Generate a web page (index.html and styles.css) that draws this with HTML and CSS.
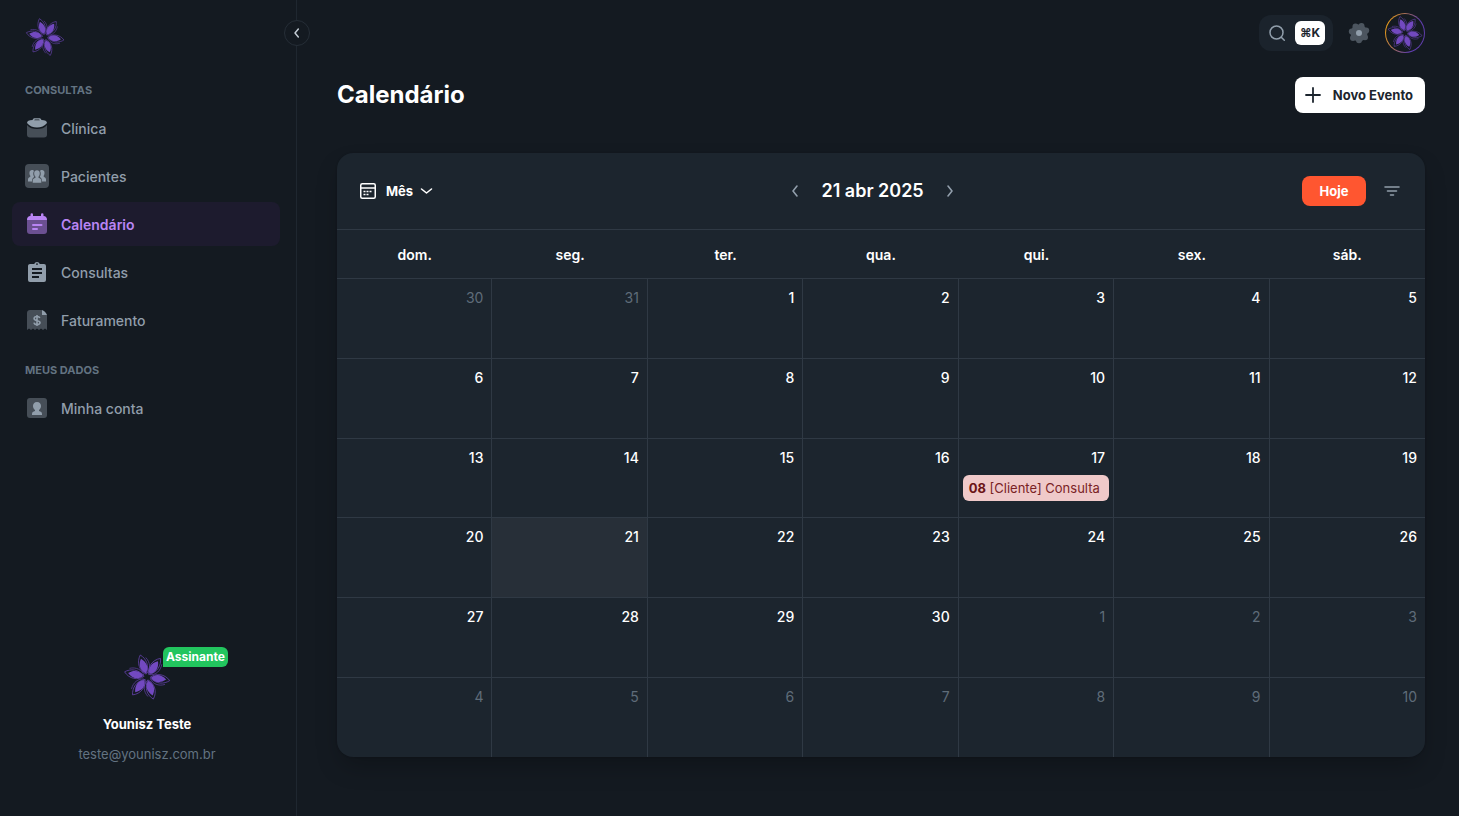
FILE: index.html
```html
<!DOCTYPE html>
<html lang="pt-BR">
<head>
    <meta charset="UTF-8">
    <meta name="viewport" content="width=device-width, initial-scale=1.0">
    <title>Calendário</title>
    <link rel="stylesheet" href="styles.css">
</head>
<body>
    <!-- Shared symbols -->
    <svg class="symbols" aria-hidden="true">
        <symbol id="petal" viewBox="0 0 48 48">
            <path d="M24 21C18.500 16 18 7 24 1c4.500 5 6 13 0 20z" fill="none" stroke="#6a45b4" stroke-width=".7"/>
            <path d="M25 20.500c5-3 6.500-9.500 3.500-15.500" fill="none" stroke="#6a45b4" stroke-width=".6"/>
            <path d="M24 20c-4.800-4-5-10-.4-15.300 4.800 5 5 11.300.4 15.300z" fill="#7249c0"/>
        </symbol>
        <symbol id="flower" viewBox="0 0 48 48">
            <use href="#petal" width="48" height="48" transform="rotate(-17 24 24)"/>
            <use href="#petal" width="48" height="48" transform="rotate(36 24 24)"/>
            <use href="#petal" width="48" height="48" transform="rotate(99 24 24)"/>
            <use href="#petal" width="48" height="48" transform="rotate(164 24 24)"/>
            <use href="#petal" width="48" height="48" transform="rotate(219 24 24)"/>
            <use href="#petal" width="48" height="48" transform="rotate(283 24 24)"/>
        </symbol>
    </svg>

    <div class="layout">
        <aside class="sidebar">
            <a href="#" class="logo" aria-label="Início">
                <svg width="40" height="40"><use href="#flower"/></svg>
            </a>
            <button class="collapse-btn" aria-label="Recolher menu">
                <svg width="16" height="16" viewBox="0 0 24 24" fill="none" stroke="currentColor" stroke-width="2.200" stroke-linecap="round" stroke-linejoin="round"><path d="M14 6l-5 6 5 6"/></svg>
            </button>

            <nav class="nav">
                <h2 class="nav-title">Consultas</h2>
                <ul class="nav-list">
                    <li><a href="#" class="nav-item">
                        <svg width="24" height="24" viewBox="0 0 24 24" fill="currentColor">
                            <path opacity=".4" d="M2 9c2.500 3 6 4 10 4s7.500-1 10-4v9.500a3 3 0 0 1-3 3H5a3 3 0 0 1-3-3z"/>
                            <path d="M7.500 4C8 2.700 9 2.300 10 2.300h4c1 0 2 .4 2.500 1.700C20 4.300 22 5 22 7c-2.500 3.300-6 4.500-10 4.500S4.500 10.300 2 7c0-2 2-2.700 5.500-3zm1.700 0.200h5.600c-.2-.6-.5-.8-.8-.8h-4c-.3 0-.6.2-.8.800z" fill-rule="evenodd"/>
                        </svg>
                        Clínica
                    </a></li>
                    <li><a href="#" class="nav-item">
                        <svg width="24" height="24" viewBox="0 0 24 24" fill="currentColor">
                            <rect opacity=".4" width="24" height="24" rx="4"/>
                            <path d="M7 6c1 0 1.600.4 2 1-.7 1-.8 2.200-.7 3.400.1 1 .5 1.800 1 2.500C7.500 13.700 7 15 7 17.500H3v-2c0-1.600 1.200-2.200 2.300-2.700v-1C4 10 4 6 7 6zM17 6c-1 0-1.600.4-2 1 .7 1 .8 2.200.7 3.400-.1 1-.5 1.800-1 2.500 1.800.8 2.300 2.100 2.300 4.600h4v-2c0-1.600-1.200-2.200-2.300-2.700v-1C20 10 20 6 17 6z"/>
                            <path d="M12 6.300c3.600 0 3.300 4.700 1.500 6.500v1c1.500.5 2.800 1.100 2.800 3v2H7.700v-2c0-1.900 1.300-2.500 2.800-3v-1C8.700 11 8.400 6.300 12 6.300z"/>
                        </svg>
                        Pacientes
                    </a></li>
                    <li><a href="#" class="nav-item active" aria-current="page">
                        <svg width="24" height="24" viewBox="0 0 24 24" fill="currentColor">
                            <path opacity=".5" d="M2 8h20v11a3 3 0 0 1-3 3H5a3 3 0 0 1-3-3z"/>
                            <path d="M5.500 2.500a1 1 0 0 1 2.500 0V4h8V2.500a1 1 0 0 1 2.500 0V4C21 4.200 22 5.500 22 8H2c0-2.500 1-3.800 3.500-4z"/>
                            <rect x="7" y="12" width="10.500" height="2" rx="1"/>
                            <rect x="7" y="16" width="6" height="2" rx="1"/>
                        </svg>
                        Calendário
                    </a></li>
                    <li><a href="#" class="nav-item">
                        <svg width="24" height="24" viewBox="0 0 24 24" fill="currentColor">
                            <path fill-rule="evenodd" d="M5 4h4.200a3 3 0 0 1 5.600 0H19a2 2 0 0 1 2 2v14a2 2 0 0 1-2 2H5a2 2 0 0 1-2-2V6c0-1.100.9-2 2-2zm7-.8a.8.8 0 1 0 0 1.800.8.8 0 0 0 0-1.800zM7 8v2h10V8zm0 4v2h10v-2zm0 4v2h7v-2z"/>
                        </svg>
                        Consultas
                    </a></li>
                    <li><a href="#" class="nav-item">
                        <svg width="24" height="24" viewBox="0 0 24 24" fill="currentColor">
                            <path opacity=".4" d="M5 2h12v5h5v15l-2-1.500-2 1.500-2-1.500-2 1.500-2-1.500-2 1.500-2-1.500L6 22l-2-1.500L2 22V5c0-1.700 1.300-3 3-3z"/>
                            <path d="M17 2c2 .5 4 2.500 5 5h-5z"/>
                            <path d="M14.800 10c-.3-1-1.400-1.500-2.800-1.500-1.700 0-2.900.8-2.900 2.100 0 3 5.900 1.200 5.900 4 0 1.300-1.200 2-3 2-1.600 0-2.800-.7-3-1.900M12 7v11" fill="none" stroke="currentColor" stroke-width="1.600"/>
                        </svg>
                        Faturamento
                    </a></li>
                </ul>

                <h2 class="nav-title">Meus dados</h2>
                <ul class="nav-list">
                    <li><a href="#" class="nav-item">
                        <svg width="24" height="24" viewBox="0 0 24 24" fill="currentColor">
                            <rect opacity=".4" x="2" y="2" width="20" height="20" rx="3"/>
                            <path d="M12 6c2.700 0 4 1.800 4 4 0 1.800-.8 3.200-2 4v1c1.800.4 3 1.300 3 3v1H7v-1c0-1.700 1.200-2.600 3-3v-1c-1.200-.8-2-2.200-2-4 0-2.200 1.300-4 4-4z"/>
                        </svg>
                        Minha conta
                    </a></li>
                </ul>
            </nav>

            <div class="profile">
                <div class="profile-avatar">
                    <svg width="48" height="48"><use href="#flower"/></svg>
                    <span class="badge">Assinante</span>
                </div>
                <p class="profile-name">Younisz Teste</p>
                <p class="profile-email">teste@younisz.com.br</p>
            </div>
        </aside>

        <div class="main">
            <header class="topbar">
                <button class="search-btn" aria-label="Buscar">
                    <svg width="20" height="20" viewBox="0 0 20 20" fill="none" stroke="currentColor" stroke-width="1.500" stroke-linecap="round"><circle cx="9.500" cy="9.500" r="6.500"/><path d="M14.500 14.500l2.800 2.800"/></svg>
                    <kbd>⌘K</kbd>
                </button>
                <button class="icon-btn" aria-label="Configurações">
                    <svg width="24" height="24" viewBox="0 0 24 24" fill="currentColor">
                        <g opacity=".45">
                            <circle cx="12" cy="12" r="8.500"/>
                            <circle cx="14.500" cy="5" r="3"/>
                            <circle cx="19.200" cy="9.500" r="3"/>
                            <circle cx="18" cy="16.200" r="3"/>
                            <circle cx="12" cy="19.200" r="3"/>
                            <circle cx="6" cy="17" r="3"/>
                            <circle cx="4.800" cy="10.500" r="3"/>
                            <circle cx="8.500" cy="5.500" r="3"/>
                        </g>
                        <circle cx="12" cy="12" r="3"/>
                    </svg>
                </button>
                <button class="account-btn" aria-label="Conta">
                    <svg width="36" height="36"><use href="#flower"/></svg>
                </button>
            </header>

            <main class="content">
                <div class="page-head">
                    <h1>Calendário</h1>
                    <button class="new-btn">
                        <svg width="20" height="20" viewBox="0 0 20 20" fill="none" stroke="currentColor" stroke-width="1.800" stroke-linecap="round"><path d="M10 3v14M3 10h14"/></svg>
                        Novo Evento
                    </button>
                </div>

                <section class="card">
                    <div class="toolbar">
                        <label class="view">
                            <svg width="20" height="20" viewBox="0 0 20 20" fill="none" stroke="currentColor" stroke-width="1.500">
                                <rect x="2.750" y="2.750" width="14.500" height="14.500" rx="1.500"/>
                                <path d="M3 7h14"/>
                                <path d="M8.500 10.500h2M11.500 10.500h2M5.500 10.500h2M5.500 13.500h2M8.500 13.500h2"/>
                            </svg>
                            <select aria-label="Visualização">
                                <option>Mês</option>
                                <option>Semana</option>
                                <option>Dia</option>
                            </select>
                            <svg class="chevron" width="16" height="16" viewBox="0 0 16 16" fill="none" stroke="currentColor" stroke-width="1.600" stroke-linecap="round" stroke-linejoin="round"><path d="M2.500 6l5 4 5-4"/></svg>
                        </label>
                        <div class="date-nav">
                            <button aria-label="Anterior"><svg width="20" height="20" viewBox="0 0 20 20" fill="none" stroke="currentColor" stroke-width="1.600" stroke-linecap="round" stroke-linejoin="round"><path d="M12 5l-4 5 4 5"/></svg></button>
                            <h2>21 abr 2025</h2>
                            <button aria-label="Próximo"><svg width="20" height="20" viewBox="0 0 20 20" fill="none" stroke="currentColor" stroke-width="1.600" stroke-linecap="round" stroke-linejoin="round"><path d="M8 5l4 5-4 5"/></svg></button>
                        </div>
                        <div class="actions">
                            <button class="today-btn">Hoje</button>
                            <button class="icon-btn" aria-label="Filtros">
                                <svg width="20" height="20" viewBox="0 0 20 20" fill="none" stroke="currentColor" stroke-width="1.600" stroke-linecap="round"><path d="M3 6h14M5.500 10h9M8.500 14h3"/></svg>
                            </button>
                        </div>
                    </div>

                    <table class="calendar">
                        <thead>
                            <tr><th>dom.</th><th>seg.</th><th>ter.</th><th>qua.</th><th>qui.</th><th>sex.</th><th>sáb.</th></tr>
                        </thead>
                        <tbody>
                            <tr><td class="other">30</td><td class="other">31</td><td>1</td><td>2</td><td>3</td><td>4</td><td>5</td></tr>
                            <tr><td>6</td><td>7</td><td>8</td><td>9</td><td>10</td><td>11</td><td>12</td></tr>
                            <tr><td>13</td><td>14</td><td>15</td><td>16</td><td>17<a href="#" class="event"><b>08</b> [Cliente] Consulta</a></td><td>18</td><td>19</td></tr>
                            <tr><td>20</td><td class="today">21</td><td>22</td><td>23</td><td>24</td><td>25</td><td>26</td></tr>
                            <tr><td>27</td><td>28</td><td>29</td><td>30</td><td class="other">1</td><td class="other">2</td><td class="other">3</td></tr>
                            <tr><td class="other">4</td><td class="other">5</td><td class="other">6</td><td class="other">7</td><td class="other">8</td><td class="other">9</td><td class="other">10</td></tr>
                        </tbody>
                    </table>
                </section>
            </main>
        </div>
    </div>
</body>
</html>
```

FILE: styles.css
```css
* {
    margin: 0;
    padding: 0;
    box-sizing: border-box;
}

body {
    font-family: Inter, "Liberation Sans", sans-serif;
    font-size: 14px;
    background: #141a21;
    color: #fff;
}

button,
select {
    font: inherit;
    color: inherit;
    background: none;
    border: none;
    cursor: pointer;
}

a {
    color: inherit;
    text-decoration: none;
}

ul {
    list-style: none;
}

svg {
    display: block;
    flex-shrink: 0;
}

.symbols {
    position: absolute;
    width: 0;
    height: 0;
}

.layout {
    display: flex;
    min-height: 100vh;
}

/* Sidebar */
.sidebar {
    position: relative;
    width: 297px;
    flex-shrink: 0;
    display: flex;
    flex-direction: column;
    border-right: 1px solid #1f2730;
    padding: 17px 16px 51px 12px;
}

.logo {
    align-self: flex-start;
    margin-left: 13px;
}

.collapse-btn {
    position: absolute;
    top: 20px;
    right: -14px;
    width: 26px;
    height: 26px;
    display: flex;
    align-items: center;
    justify-content: center;
    background: #141a21;
    border: 1px solid #262e37;
    border-radius: 50%;
    color: #c4cdd5;
}

.nav {
    flex: 1;
    padding-top: 17px;
}

.nav-title {
    padding: 8px 13px;
    font-size: 11px;
    line-height: 16px;
    font-weight: 700;
    text-transform: uppercase;
    color: #637381;
}

.nav-list {
    display: flex;
    flex-direction: column;
    gap: 4px;
    margin-bottom: 12px;
}

.nav-item {
    display: flex;
    align-items: center;
    gap: 12px;
    height: 44px;
    padding: 0 13px;
    border-radius: 8px;
    font-weight: 500;
    color: #919eab;
}

.nav-item.active {
    background: #1d1b2e;
    color: #b985f4;
    font-weight: 600;
}

.profile {
    padding-left: 2px;
    text-align: center;
    line-height: 22px;
}

.profile-avatar {
    position: relative;
    width: 48px;
    margin: 0 auto 12px;
}

.badge {
    position: absolute;
    top: -6px;
    left: 40px;
    height: 20px;
    padding: 0 3px;
    border-radius: 6px 6px 6px 0;
    background: #22c55e;
    font-size: 12px;
    line-height: 20px;
    font-weight: 700;
}

.profile-name {
    margin-bottom: 8px;
    font-size: 13px;
    font-weight: 700;
}

.profile-email {
    font-size: 13px;
    color: #637381;
}

/* Main column */
.main {
    flex: 1;
    min-width: 0;
    padding: 0 34px 0 40px;
}

.topbar {
    display: flex;
    align-items: center;
    justify-content: flex-end;
    gap: 14px;
    height: 66px;
}

.search-btn {
    display: flex;
    align-items: center;
    gap: 8px;
    height: 36px;
    padding: 0 8px;
    border-radius: 12px;
    background: #1b232c;
    color: #919eab;
}

.search-btn kbd {
    width: 30px;
    font-family: inherit;
    font-size: 12px;
    line-height: 24px;
    font-weight: 700;
    text-align: center;
    border-radius: 6px;
    background: #fff;
    color: #1c252e;
}

.icon-btn {
    color: #919eab;
}

.account-btn {
    width: 40px;
    height: 40px;
    display: flex;
    align-items: center;
    justify-content: center;
    border: 1px solid transparent;
    border-radius: 50%;
    background: linear-gradient(#141a21, #141a21) padding-box, linear-gradient(110deg, #ffab00, #5f3dab 70%) border-box;
}

.page-head {
    display: flex;
    align-items: center;
    justify-content: space-between;
    margin: 11px 0 40px;
}

.page-head h1 {
    font-size: 24px;
    line-height: 36px;
    font-weight: 700;
}

.new-btn {
    display: flex;
    align-items: center;
    gap: 10px;
    height: 36px;
    padding: 0 12px 0 8px;
    border-radius: 8px;
    background: #fff;
    color: #1c252e;
    font-size: 13px;
    font-weight: 700;
}

/* Calendar card */
.card {
    border-radius: 16px;
    background: #1c252e;
    box-shadow: 0 0 2px rgba(0, 0, 0, 0.2), 0 12px 24px -4px rgba(0, 0, 0, 0.25);
    overflow: hidden;
}

.toolbar {
    display: flex;
    align-items: center;
    justify-content: space-between;
    height: 76px;
    padding: 0 23px 0 21px;
}

.view {
    display: flex;
    align-items: center;
    gap: 8px;
    padding-right: 8px;
}

.view select {
    appearance: none;
    field-sizing: content;
    font-weight: 700;
    font-size: 13px;
    line-height: 24px;
}

.view option {
    color: #1c252e;
}

.chevron {
    margin-left: -2px;
    pointer-events: none;
}

.date-nav {
    display: flex;
    align-items: center;
    gap: 16px;
}

.date-nav h2 {
    font-size: 18px;
    line-height: 28px;
    font-weight: 600;
}

.date-nav button {
    color: #919eab;
}

.actions {
    display: flex;
    align-items: center;
    gap: 16px;
}

.today-btn {
    width: 64px;
    height: 30px;
    border-radius: 8px;
    background: #ff5630;
    font-size: 13px;
    font-weight: 700;
}

.calendar {
    width: 100%;
    height: calc(100vh - 288px);
    table-layout: fixed;
    border-collapse: separate;
    border-spacing: 0;
}

.calendar th {
    height: 49px;
    border-top: 1px solid #2f3944;
    font-weight: 600;
}

.calendar td {
    height: 72px;
    padding: 8px 8px 0 4px;
    border-top: 1px solid #2f3944;
    border-right: 1px solid #2f3944;
    font-size: 14px;
    line-height: 22px;
    font-weight: 500;
    text-align: right;
    vertical-align: top;
}

.calendar td:last-child {
    border-right: none;
}

.calendar .other {
    color: #5f6c79;
    font-weight: 400;
}

.calendar .today {
    background: #272f38;
}

.event {
    display: block;
    margin: 6px -4px 0 0;
    padding: 0 6px;
    border-radius: 6px;
    background: #efc9c9;
    color: #7a2325;
    font-size: 13px;
    line-height: 26px;
    font-weight: 400;
    text-align: left;
    white-space: nowrap;
    overflow: hidden;
}

.event b {
    font-weight: 700;
    color: #6b1316;
}
```
